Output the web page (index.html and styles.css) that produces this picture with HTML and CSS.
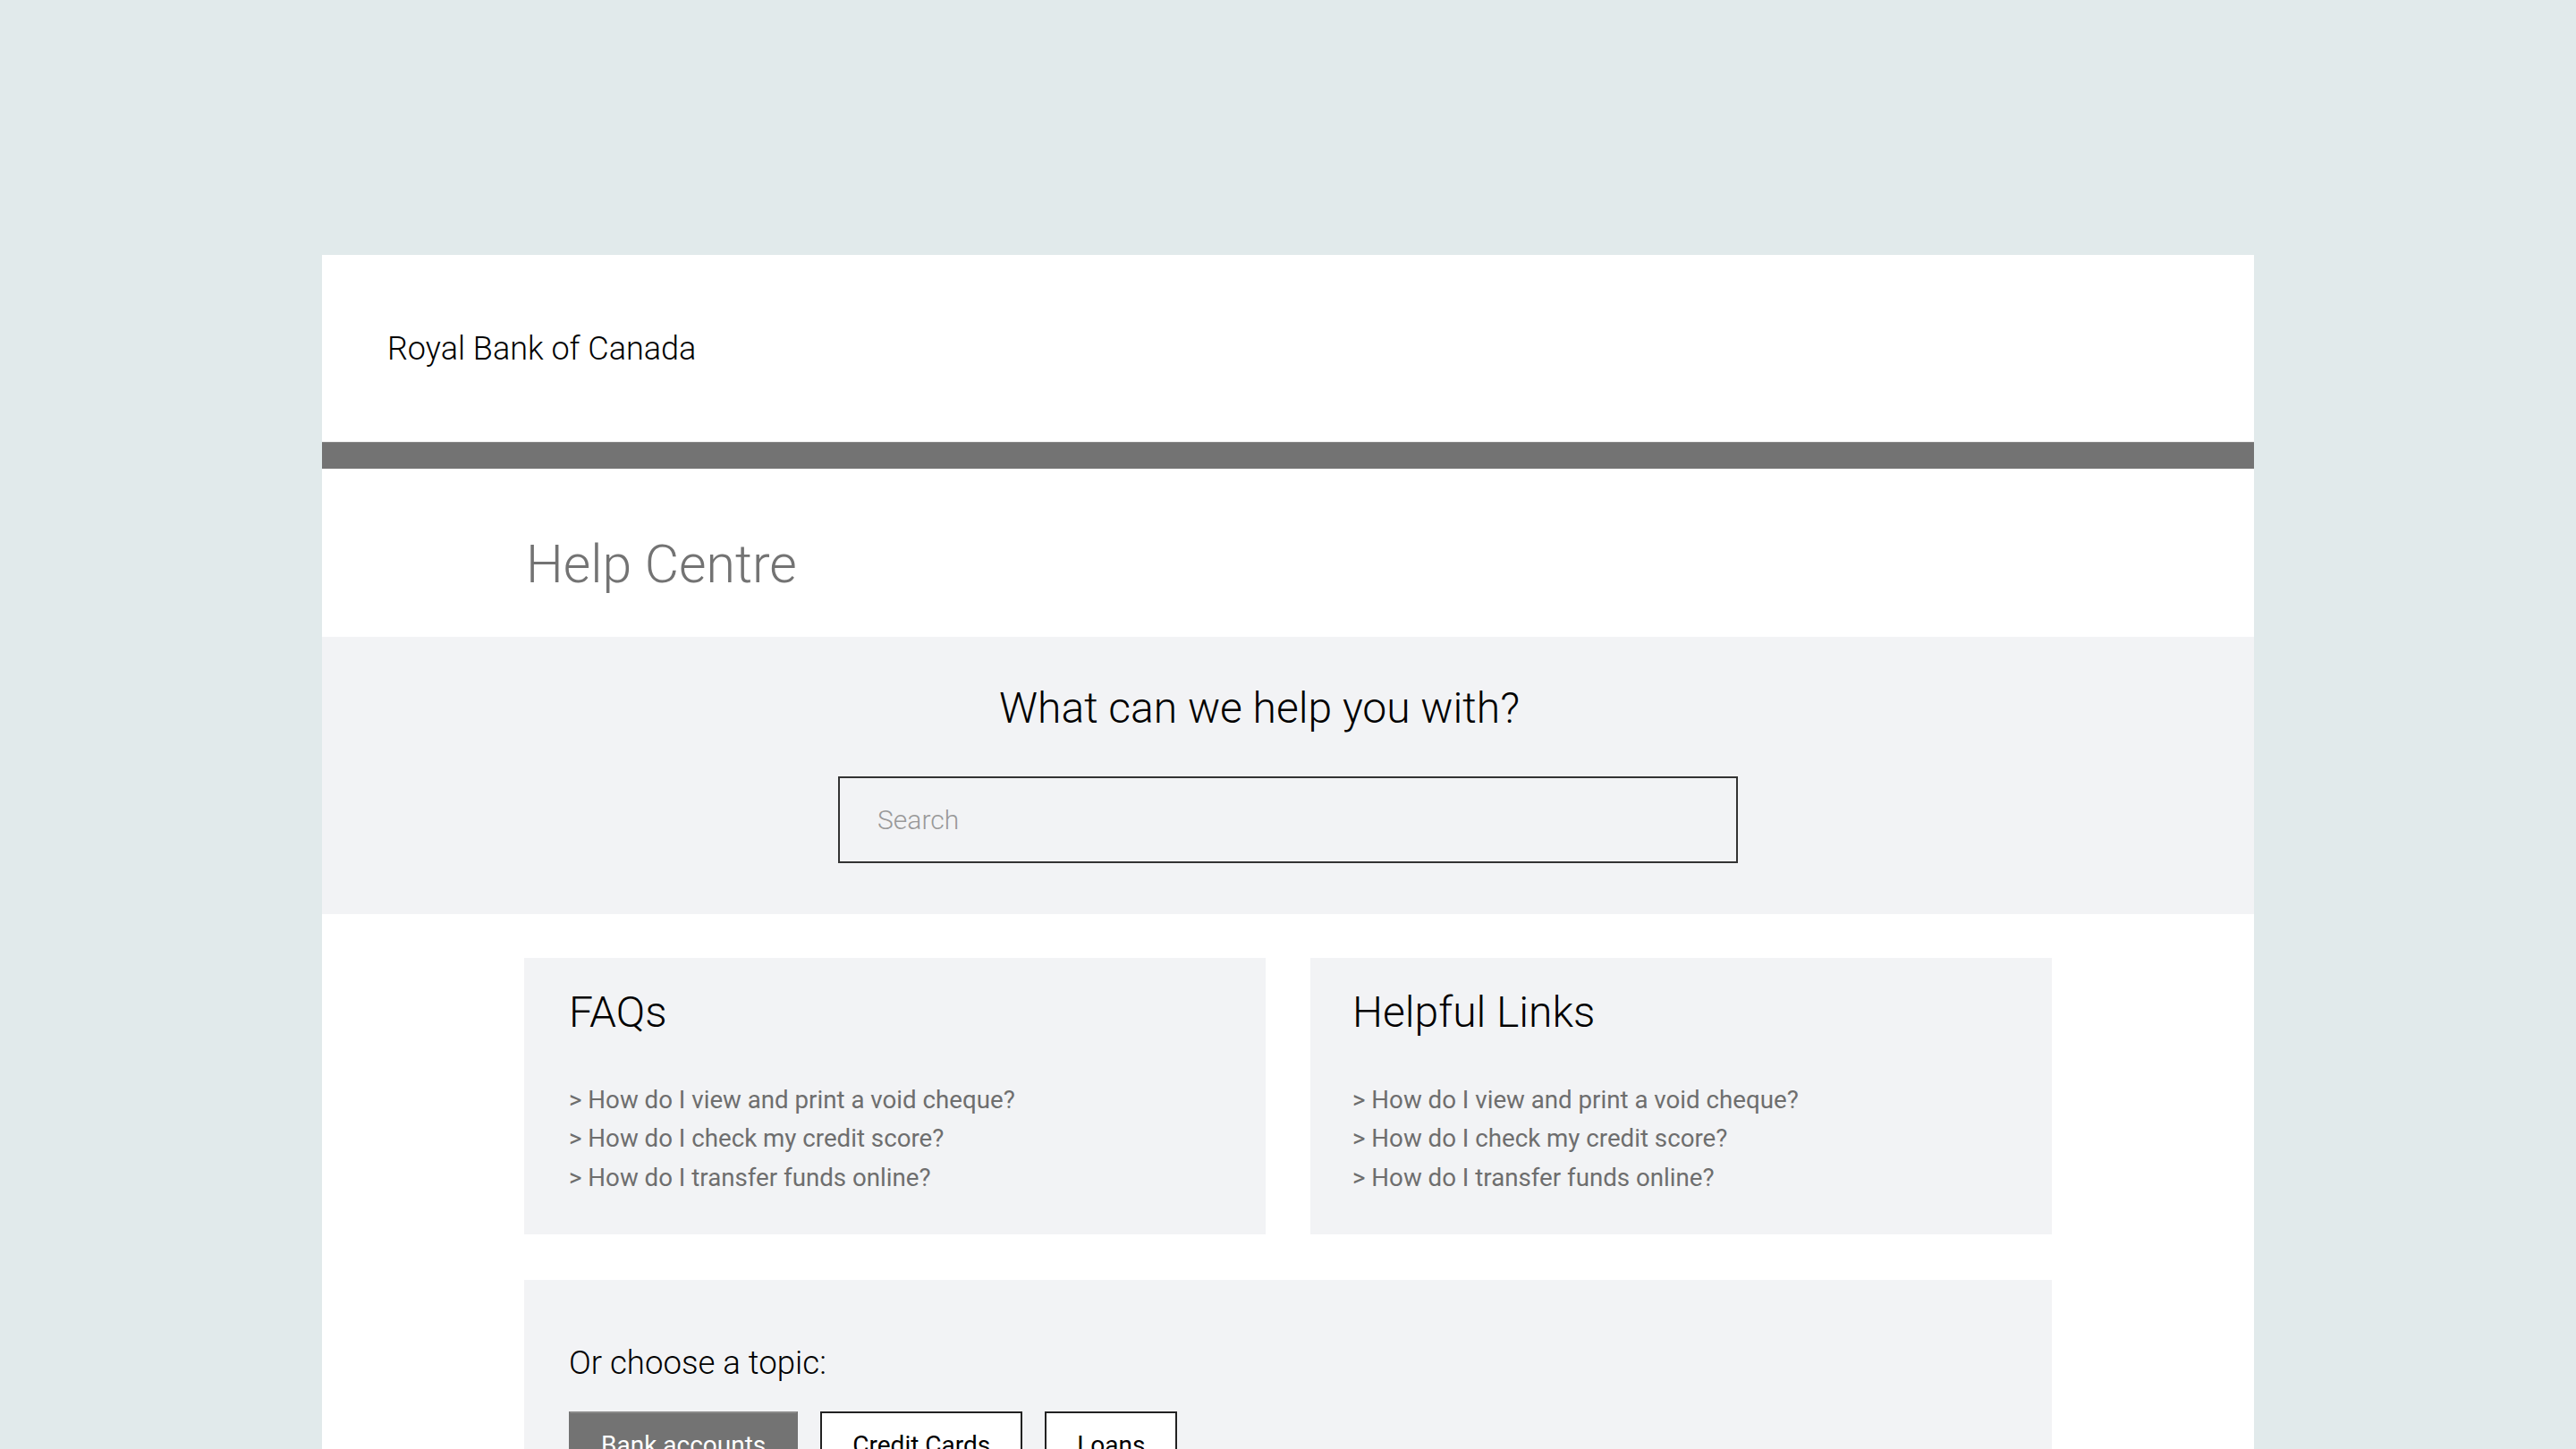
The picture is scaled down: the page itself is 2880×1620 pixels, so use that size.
FILE: index.html
```html
<!DOCTYPE html>
<html lang="en">
<head>
<meta charset="utf-8">
<title>Help Centre - Royal Bank of Canada</title>
<link rel="stylesheet" href="styles.css">
</head>
<body>
<div class="page">
  <header class="header">
    <div class="brand">Royal Bank of Canada</div>
  </header>
  <div class="bar"></div>
  <section class="title-section">
    <h1 class="page-title">Help Centre</h1>
  </section>
  <section class="search-section">
    <h2 class="search-heading">What can we help you with?</h2>
    <div class="search-box">
      <input class="search-input" type="text" placeholder="Search">
    </div>
  </section>
  <main class="content">
    <div class="cards">
      <div class="card">
        <h3 class="card-title">FAQs</h3>
        <ul class="link-list">
          <li>&gt; How do I view and print a void cheque?</li>
          <li>&gt; How do I check my credit score?</li>
          <li>&gt; How do I transfer funds online?</li>
        </ul>
      </div>
      <div class="card">
        <h3 class="card-title">Helpful Links</h3>
        <ul class="link-list">
          <li>&gt; How do I view and print a void cheque?</li>
          <li>&gt; How do I check my credit score?</li>
          <li>&gt; How do I transfer funds online?</li>
        </ul>
      </div>
    </div>
    <div class="topic-card">
      <p class="topic-label">Or choose a topic:</p>
      <div class="topics">
        <button class="topic active">Bank accounts</button>
        <button class="topic">Credit Cards</button>
        <button class="topic">Loans</button>
      </div>
    </div>
  </main>
</div>
</body>
</html>
```
FILE: styles.css
```css
* { box-sizing: border-box; }
html, body { margin: 0; padding: 0; }
body {
  background: #e1eaeb;
  font-family: Roboto, "Liberation Sans", Arial, sans-serif;
  color: #111;
  overflow: hidden;
  height: 1620px;
}
.page {
  width: 2160px;
  margin: 285px auto 0;
  background: #fff;
}
.header {
  height: 209px;
  display: flex;
  align-items: center;
  padding-left: 73px;
}
.brand {
  font-size: 36px;
  font-weight: 300;
  color: #000;
  line-height: 1;
  margin-top: 1px;
}
.bar {
  height: 30px;
  background: #737373;
  border-top: 1px solid #8a8a8a;
}
.title-section {
  height: 188px;
  padding-left: 228px;
  padding-top: 77px;
}
.page-title {
  margin: 0;
  font-size: 59px;
  font-weight: 300;
  line-height: 1;
  color: #737373;
}
.search-section {
  background: #f2f3f5;
  padding: 56px 0 57px;
  display: flex;
  flex-direction: column;
  align-items: center;
}
.search-heading {
  margin: 0 0 52px;
  font-size: 48px;
  font-weight: 300;
  line-height: 1;
  color: #000;
  padding-right: 64px;
}
.search-box {
  width: 1006px;
  height: 97px;
  border: 2px solid #333;
  background: #f2f3f5;
}
.search-input {
  width: 100%;
  height: 100%;
  border: none;
  outline: none;
  background: transparent;
  padding: 0 0 0 42px;
  font-family: Roboto, "Liberation Sans", Arial, sans-serif;
  font-size: 30px;
  font-weight: 300;
  color: #333;
}
.search-input::placeholder { color: #999; }
.content {
  padding: 49px 226px 0;
}
.cards {
  display: grid;
  grid-template-columns: 1fr 1fr;
  gap: 50px;
}
.card {
  background: #f2f3f5;
  height: 309px;
  padding: 37px 50px 0;
}
.card + .card { padding-left: 47px; }
.card-title {
  margin: 0 0 52px;
  font-size: 48px;
  font-weight: 300;
  line-height: 1;
  color: #000;
}
.link-list {
  list-style: none;
  margin: 0;
  padding: 0;
}
.link-list li {
  font-size: 27.7px;
  line-height: 43.3px;
  color: #6e6e6e;
}
.topic-card {
  margin-top: 51px;
  background: #f2f3f5;
  padding: 75px 50px 60px;
  height: 400px;
}
.topic-label {
  margin: 0 0 35px;
  font-size: 36.6px;
  font-weight: 300;
  line-height: 1;
  color: #000;
}
.topics {
  display: flex;
  gap: 25px;
}
.topic {
  font-family: Roboto, "Liberation Sans", Arial, sans-serif;
  font-size: 28px;
  line-height: 1;
  padding: 22px 34px 19px;
  border: 2px solid #222;
  background: #fff;
  color: #000;
}
.topic.active {
  background: #737373;
  border-color: #737373;
  border-top-color: #8a8a8a;
  color: #fff;
}
```
